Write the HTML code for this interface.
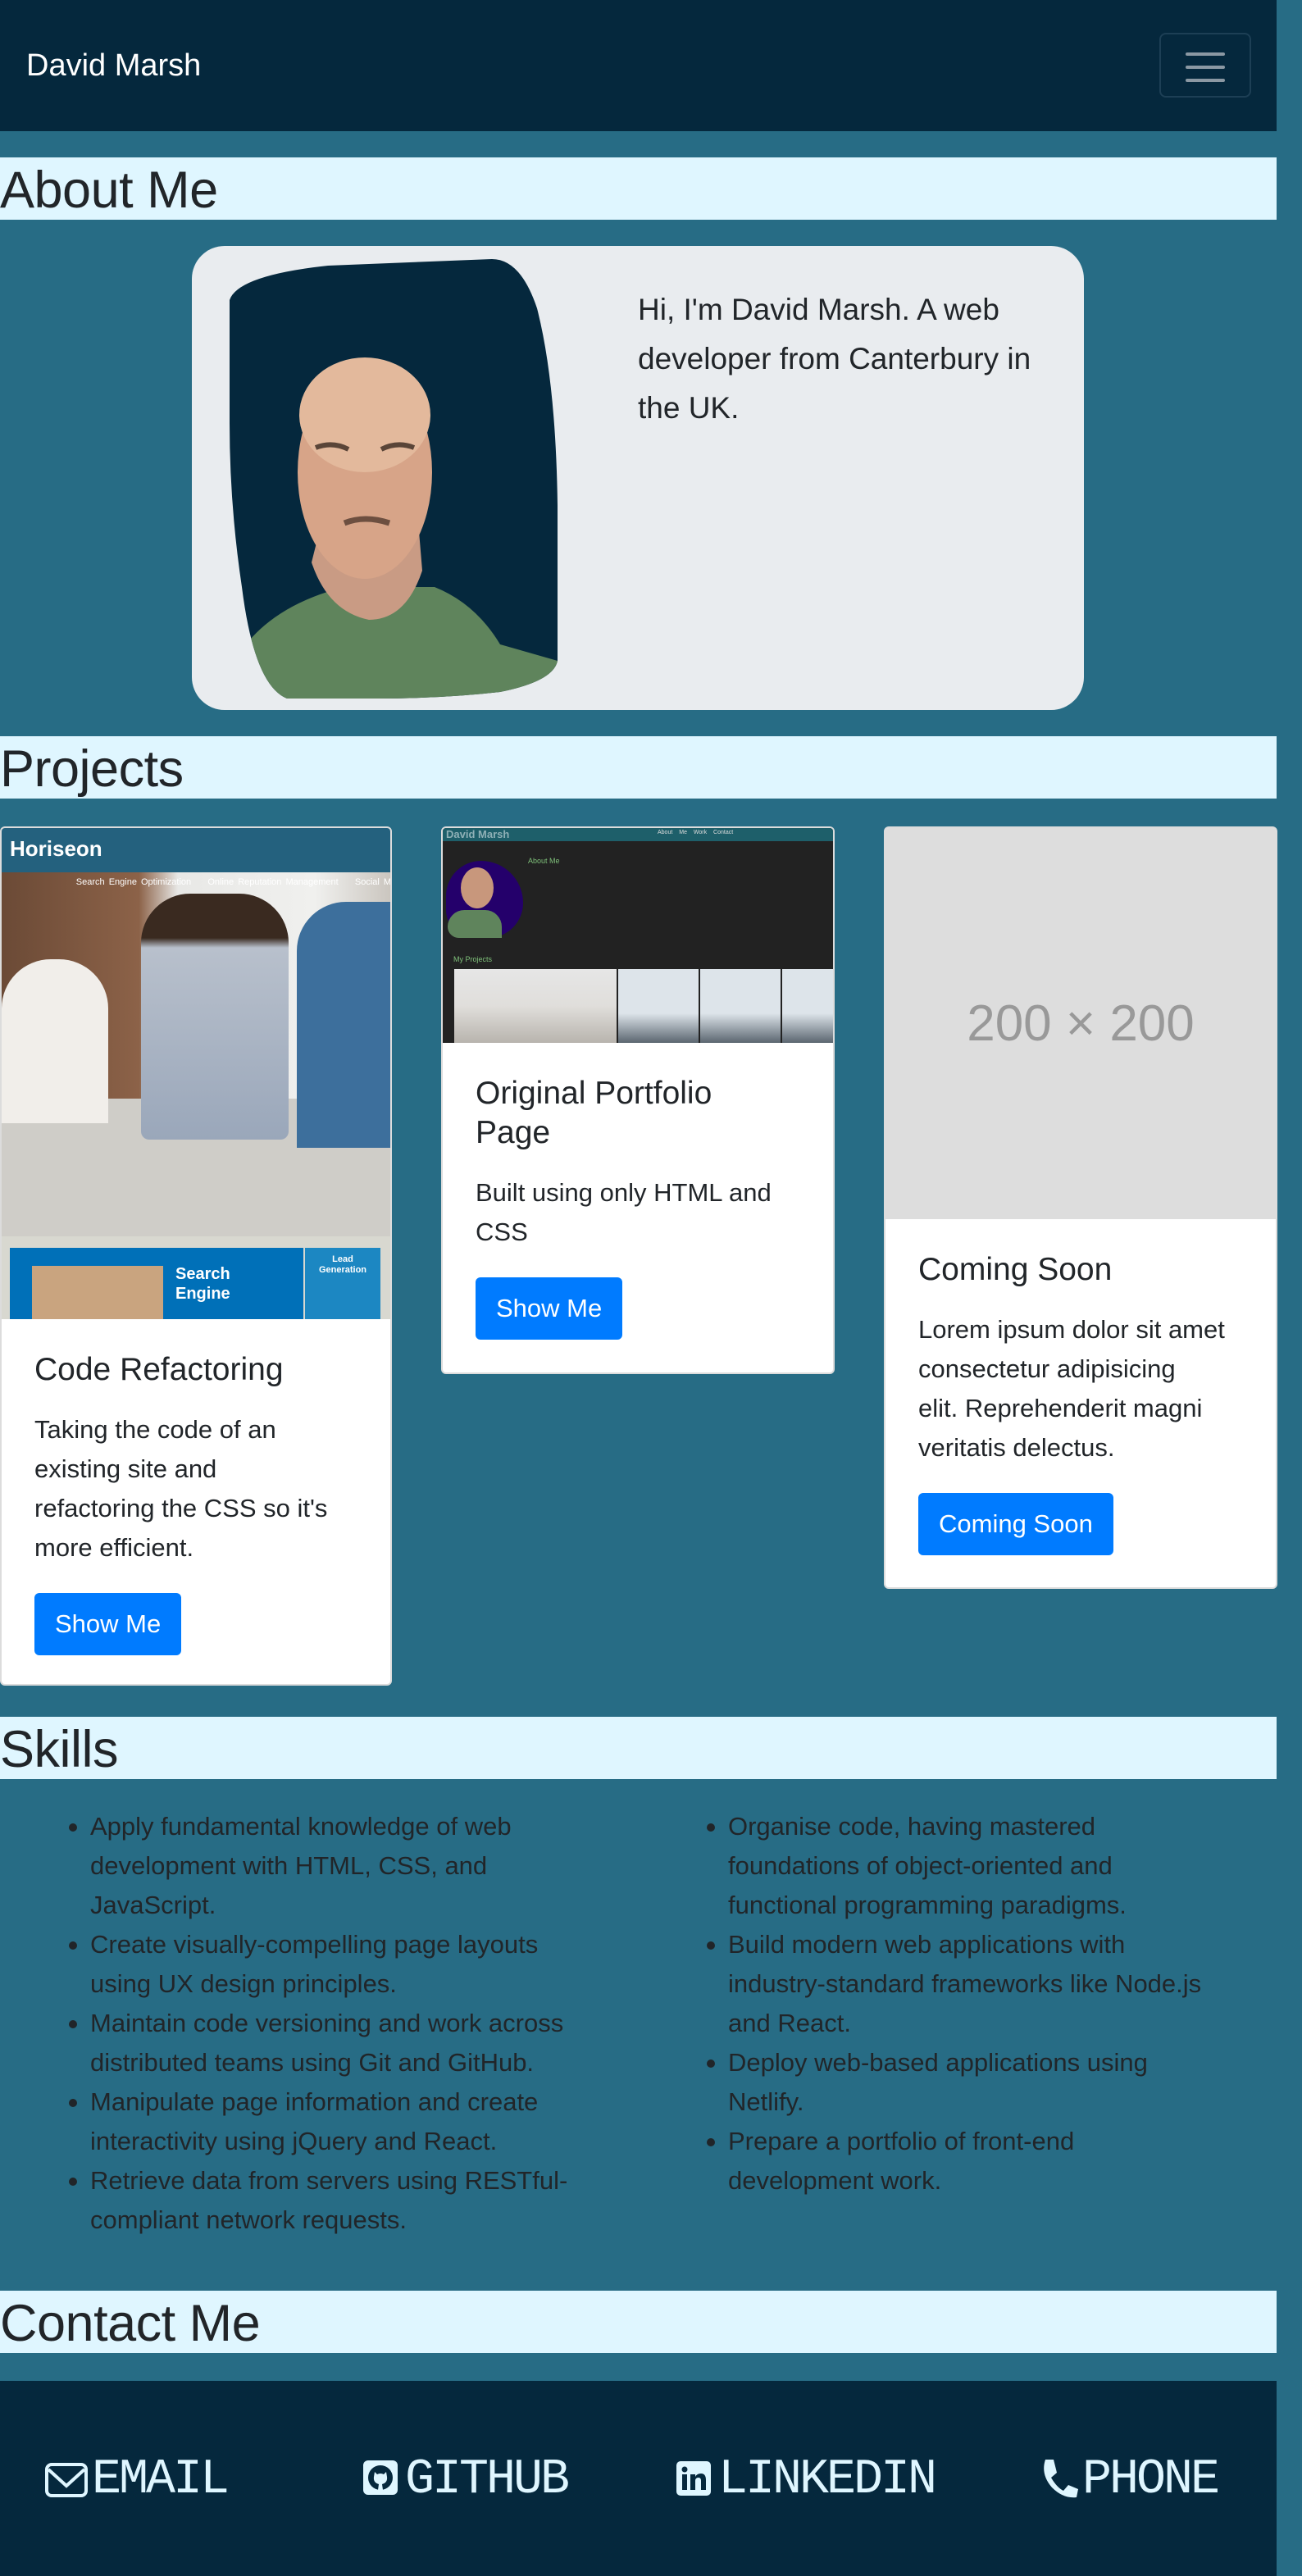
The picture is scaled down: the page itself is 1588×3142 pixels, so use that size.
<!DOCTYPE html>
<html><head><meta charset="utf-8">
<style>
*{box-sizing:border-box;margin:0;padding:0}
html,body{width:1588px;height:3142px;overflow:hidden}
body{background:#276c85;font-family:"Liberation Sans",sans-serif;color:#212529;position:relative}
.abs{position:absolute}
.nav{left:0;top:0;width:1557px;height:160px;background:#05283d}
.brand{left:32px;top:56px;font-size:38px;color:#fff;line-height:48px}
.tog{left:1414px;top:40px;width:112px;height:79px;border:2px solid #1d3f55;border-radius:8px}
.tog i{position:absolute;left:30px;width:48px;height:4px;border-radius:2px;background:#8b98a3}
.hdr{left:0;width:1557px;height:76px;background:#dff6ff;font-size:63px;line-height:80px;padding-left:0;color:#212529;letter-spacing:-0.5px}
.about{left:234px;top:300px;width:1088px;height:566px;background:#e9ecef;border-radius:40px}
.abtxt{left:778px;top:348px;width:520px;font-size:37px;line-height:60px;color:#212529;font-weight:300}
.card{background:#fff;border:2px solid #dcdcdc;border-radius:6px;overflow:hidden}
.cb{padding:38px 40px 40px 40px}
.ct{font-size:39px;line-height:48px;font-weight:500;margin-bottom:25px}
.cp{font-size:31px;line-height:48px;margin-bottom:31px}
.btn{display:inline-block;background:#007bff;color:#fff;font-size:31px;line-height:76px;height:76px;padding:0 25px;border-radius:6px}
.skills{font-size:31px;line-height:48px;color:#212529}
.skills ul{position:absolute;list-style:none}
.skills li{position:relative;white-space:nowrap}
.skills li:before{content:"";position:absolute;left:-26px;top:20px;width:10px;height:10px;border-radius:50%;background:#212529}
.foot{left:0;top:2904px;width:1557px;height:238px;background:#05283d}
.ct2{position:absolute;top:2990px;font-family:"Liberation Mono",monospace;font-size:60px;letter-spacing:-3px;color:#dff6ff;line-height:70px}
</style></head><body>
<div class="abs nav"></div>
<div class="abs brand">David Marsh</div>
<div class="abs tog"><i style="top:22px"></i><i style="top:38px"></i><i style="top:54px"></i></div>

<div class="abs hdr" style="top:192px">About Me</div>
<div class="abs about"></div>
<svg class="abs" style="left:280px;top:316px" width="400" height="536" viewBox="0 0 400 536">
<defs><clipPath id="bl"><path d="M0 50 Q10 20 120 8 L320 0 Q355 0 375 60 Q398 150 400 300 L400 490 Q395 515 330 528 Q260 536 180 536 L70 536 Q30 520 15 400 Q0 300 0 200 Z"/></clipPath></defs>
<g clip-path="url(#bl)">
<rect width="400" height="536" fill="#05283d"/>
<path d="M20 470 Q60 420 140 400 L250 400 Q300 420 330 470 L400 490 L400 536 L20 536 Z" fill="#5f845c"/>
<path d="M100 370 Q120 430 170 440 Q215 440 235 380 L230 320 L110 330 Z" fill="#c99b84"/>
<ellipse cx="165" cy="260" rx="82" ry="130" fill="#d7a488"/>
<ellipse cx="165" cy="190" rx="80" ry="70" fill="#e3b99c"/>
<path d="M105 230 Q125 222 145 232 M185 232 Q205 222 225 230" stroke="#5a4538" stroke-width="6" fill="none"/>
<path d="M140 322 Q165 312 195 322" stroke="#6d4f40" stroke-width="7" fill="none"/>
</g></svg>
<div class="abs abtxt">Hi, I'm David Marsh. A web developer from Canterbury in the UK.</div>

<div class="abs hdr" style="top:898px">Projects</div>

<div class="abs card" style="left:0;top:1008px;width:478px;height:1048px">
 <div style="height:599px;position:relative;background:#d8d8d0">
  <div class="abs" style="left:0;top:0;width:478px;height:54px;background:#24617e"></div>
  <div class="abs" style="left:10px;top:10px;color:#fff;font-size:26px;font-weight:bold">Horiseon</div>
  <div class="abs" style="left:0;top:54px;width:478px;height:444px;background:linear-gradient(90deg,#6b4a36 0,#8c6248 35%,#e8e8e6 45%,#f0f0ee 80%,#c9c4bd 100%)"></div>
  <div class="abs" style="left:0;top:330px;width:478px;height:168px;background:#cfcdc8"></div>
  <div class="abs" style="left:170px;top:80px;width:180px;height:300px;background:linear-gradient(#3a2a20 0,#3a2a20 18%,#b8c0cc 22%,#9aa7ba 100%);border-radius:60px 60px 10px 10px"></div>
  <div class="abs" style="left:0;top:160px;width:130px;height:200px;background:#f1eeea;border-radius:60px 60px 0 0"></div>
  <div class="abs" style="left:360px;top:90px;width:118px;height:300px;background:#3d6f9c;border-radius:60px 0 0 0"></div>
  <div class="abs" style="left:20px;top:60px;color:#fff;font-size:11px;white-space:nowrap;word-spacing:2px">&nbsp;&nbsp;&nbsp;&nbsp;&nbsp;&nbsp;&nbsp;&nbsp;&nbsp;&nbsp;&nbsp;&nbsp;&nbsp;&nbsp;Search Engine Optimization &nbsp;&nbsp; Online Reputation Management &nbsp;&nbsp; Social Media Marketing</div>
  <div class="abs" style="left:10px;top:512px;width:358px;height:87px;background:#0070b8"></div>
  <div class="abs" style="left:37px;top:534px;width:160px;height:65px;background:#c9a47f"></div>
  <div class="abs" style="left:212px;top:532px;color:#fff;font-size:20px;font-weight:bold;line-height:24px">Search<br>Engine</div>
  <div class="abs" style="left:370px;top:512px;width:92px;height:87px;background:#1c87c2;color:#fff;font-size:11px;font-weight:bold;text-align:center;padding-top:8px;line-height:13px">Lead<br>Generation</div>
 </div>
 <div class="cb"><div class="ct">Code Refactoring</div><div class="cp">Taking the code of an<br>existing site and<br>refactoring the CSS so it's<br>more efficient.</div><span class="btn">Show Me</span></div>
</div>

<div class="abs card" style="left:538px;top:1008px;width:480px;height:668px">
 <div style="height:262px;position:relative;background:#222">
  <div class="abs" style="left:0;top:0;width:480px;height:16px;background:#1e5f6a"></div>
  <div class="abs" style="left:4px;top:0;color:#8fb0b6;font-size:13px;font-weight:bold">David Marsh</div>
  <div class="abs" style="left:262px;top:2px;color:#ddd;font-size:7px;word-spacing:6px">About&nbsp;Me Work Contact</div>
  <div class="abs" style="left:4px;top:40px;width:94px;height:94px;border-radius:50% 60% 50% 40%;background:#24006b"></div>
  <div class="abs" style="left:22px;top:48px;width:40px;height:50px;border-radius:50%;background:#c8977c"></div>
  <div class="abs" style="left:6px;top:100px;width:66px;height:34px;border-radius:30px 30px 0 20px;background:#5f845c"></div>
  <div class="abs" style="left:104px;top:35px;color:#7fc07a;font-size:9px">About Me</div>
  <div class="abs" style="left:13px;top:155px;color:#7fc07a;font-size:9px">My Projects</div>
  <div class="abs" style="left:14px;top:172px;width:198px;height:90px;background:linear-gradient(#e6e6e6 0,#e0dedb 50%,#b8b4ae 100%)"></div>
  <div class="abs" style="left:214px;top:172px;width:98px;height:90px;background:linear-gradient(#dde4ea 0,#dde4ea 60%,#5b6670 100%)"></div>
  <div class="abs" style="left:314px;top:172px;width:98px;height:90px;background:linear-gradient(#dde4ea 0,#dde4ea 60%,#5b6670 100%)"></div>
  <div class="abs" style="left:414px;top:172px;width:66px;height:90px;background:linear-gradient(#dde4ea 0,#dde4ea 60%,#5b6670 100%)"></div>
 </div>
 <div class="cb"><div class="ct">Original Portfolio<br>Page</div><div class="cp">Built using only HTML and<br>CSS</div><span class="btn">Show Me</span></div>
</div>

<div class="abs card" style="left:1078px;top:1008px;width:480px;height:930px">
 <div style="height:477px;background:#dddddd;color:#999;font-size:62px;text-align:center;line-height:477px">200 × 200</div>
 <div class="cb"><div class="ct">Coming Soon</div><div class="cp">Lorem ipsum dolor sit amet<br>consectetur adipisicing<br>elit. Reprehenderit magni<br>veritatis delectus.</div><span class="btn">Coming Soon</span></div>
</div>

<div class="abs hdr" style="top:2094px">Skills</div>
<div class="skills">
<ul style="left:110px;top:2204px">
<li>Apply fundamental knowledge of web<br>development with HTML, CSS, and<br>JavaScript.</li>
<li>Create visually-compelling page layouts<br>using UX design principles.</li>
<li>Maintain code versioning and work across<br>distributed teams using Git and GitHub.</li>
<li>Manipulate page information and create<br>interactivity using jQuery and React.</li>
<li>Retrieve data from servers using RESTful-<br>compliant network requests.</li>
</ul>
<ul style="left:888px;top:2204px">
<li>Organise code, having mastered<br>foundations of object-oriented and<br>functional programming paradigms.</li>
<li>Build modern web applications with<br>industry-standard frameworks like Node.js<br>and React.</li>
<li>Deploy web-based applications using<br>Netlify.</li>
<li>Prepare a portfolio of front-end<br>development work.</li>
</ul>
</div>

<div class="abs hdr" style="top:2794px">Contact Me</div>
<div class="abs foot"></div>
<svg class="abs" style="left:55px;top:3004px" width="52" height="42" viewBox="0 0 52 42"><rect x="2" y="2" width="48" height="38" rx="6" fill="none" stroke="#dff6ff" stroke-width="4"/><path d="M4 8 L26 28 L48 8" fill="none" stroke="#dff6ff" stroke-width="4"/></svg>
<div class="ct2" style="left:112px">EMAIL</div>
<svg class="abs" style="left:443px;top:3001px" width="42" height="42" viewBox="0 0 42 42"><rect width="42" height="42" rx="6" fill="#dff6ff"/><circle cx="21" cy="21" r="15" fill="#05283d"/><path d="M14 14 L17 17 Q21 15 25 17 L28 14 L29 20 Q30 27 23 29 L24 36 L18 36 L19 29 Q12 27 13 20 Z" fill="#dff6ff"/></svg>
<div class="ct2" style="left:494px">GITHUB</div>
<svg class="abs" style="left:825px;top:3002px" width="42" height="42" viewBox="0 0 42 42"><rect width="42" height="42" rx="5" fill="#dff6ff"/><rect x="7" y="16" width="6" height="19" fill="#05283d"/><circle cx="10" cy="10" r="3.5" fill="#05283d"/><path d="M17 16 H23 V19 Q25 15 30 15 Q36 15 36 23 V35 H30 V24 Q30 20 27 20 Q23 20 23 24 V35 H17 Z" fill="#05283d"/></svg>
<div class="ct2" style="left:876px">LINKEDIN</div>
<svg class="abs" style="left:1267px;top:2998px" width="50" height="50" viewBox="0 0 50 50"><path d="M8 2 L18 2 L22 18 L15 24 Q22 36 30 40 L36 33 L48 38 L46 48 Q30 50 16 36 Q2 20 8 2 Z" fill="#dff6ff"/></svg>
<div class="ct2" style="left:1320px">PHONE</div>
</body></html>
